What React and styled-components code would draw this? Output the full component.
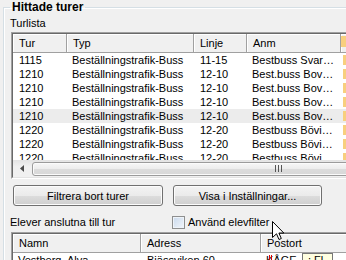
import styled, { createGlobalStyle } from "styled-components";

const GlobalStyle = createGlobalStyle`
  * { box-sizing: border-box; }
  body {
    margin: 0;
    background: #f0f0f0;
    font-family: "Liberation Sans", Arial, sans-serif;
    font-size: 11px;
    color: #000;
    overflow: hidden;
  }
`;

const Screen = styled.div`
  position: relative;
  width: 346px;
  height: 260px;
  overflow: hidden;
  background: #f0f0f0;
`;

const GroupBox = styled.fieldset`
  margin: 0 0 0 3px;
  padding: 0 0 0 6px;
  width: 420px;
  min-inline-size: 0;
  border: 1px solid #d5dfe5;
  border-right: none;
  border-bottom: none;
  box-shadow: inset 1px 1px 0 #fff;
`;

const Legend = styled.legend`
  padding: 0 2px;
  font-size: 12px;
  font-weight: bold;
  line-height: 14px;
`;

const Caption = styled.div`
  margin-top: 3px;
  height: 13px;
  line-height: 13px;
`;

const Frame = styled.div`
  margin: ${(p) => p.$mt}px 0 0 1px;
  width: 400px;
  border: 1px solid;
  border-color: #a0a0a0 #fff #fff #a0a0a0;
`;

const Well = styled.div`
  border: 1px solid;
  border-color: #696969 #e3e3e3 #e3e3e3 #696969;
  background: #fff;
`;

const Row = styled.div`
  display: grid;
  grid-template-columns: ${(p) => p.$cols};
  background: ${(p) => (p.$hot ? "#ececec" : "transparent")};
`;

const HeadCell = styled.div`
  height: 19px;
  line-height: 18px;
  padding-left: ${(p) => p.$pad ?? 6}px;
  background: #f0f0f0;
  border-right: 1px solid #a0a0a0;
  border-bottom: 1px solid #a0a0a0;
  box-shadow: inset 1px 1px 0 #fff;
  white-space: nowrap;
  overflow: hidden;
`;

const Cell = styled.div`
  position: relative;
  height: 14px;
  line-height: 14px;
  padding-left: ${(p) => p.$pad ?? 6}px;
  white-space: nowrap;
  overflow: hidden;
  text-overflow: ellipsis;
`;

const Rows = styled.div`
  height: ${(p) => p.$h}px;
  overflow: hidden;
`;

const Swatch = styled.div`
  margin: ${(p) => (p.$head ? "2px 0 0 0" : "2px 0 0 2px")};
  width: 20px;
  height: ${(p) => (p.$head ? 11 : 10)}px;
  background: #f8cf7e;
`;

const HScroll = styled.div`
  display: flex;
  align-items: center;
  height: 17px;
  background: linear-gradient(#e3e3e3, #f0f0f0 40%, #f0f0f0);
`;

const ArrowBtn = styled.div`
  flex: 0 0 17px;
  height: 17px;
  display: flex;
  align-items: center;
  justify-content: center;
`;

const Thumb = styled.div`
  flex: 0 0 492px;
  margin-left: 2px;
  height: 14px;
  border: 1px solid #9b9b9b;
  border-radius: 3px;
  background: linear-gradient(#f7f7f7, #ececec 50%, #dcdcdc 51%, #d8d8d8);
  box-shadow: inset 0 0 0 1px #fbfbfb;
  display: flex;
  align-items: center;
  justify-content: center;
`;

const ButtonRow = styled.div`
  display: flex;
  gap: 10px;
  margin: 6px 0 0 3px;
`;

const Button = styled.button`
  width: ${(p) => p.$w}px;
  height: 21px;
  padding: 0;
  font: inherit;
  color: #000;
  border: 1px solid #707070;
  border-radius: 3px;
  background: linear-gradient(#f3f3f3, #ebebeb 50%, #dddddd 51%, #cfcfcf);
  box-shadow: inset 0 0 0 1px #fcfcfc;
`;

const OptionRow = styled.div`
  display: flex;
  align-items: center;
  height: 14px;
  margin-top: 9px;
`;

const OptionLabel = styled.div`
  width: 162px;
  line-height: 14px;
`;

const Check = styled.span`
  display: inline-block;
  width: 13px;
  height: 13px;
  margin-right: 3px;
  border: 1px solid #8e8f8f;
  background: linear-gradient(135deg, #c9d9ec, #f2f6fb);
  box-shadow: inset 0 0 0 1px #eef3f9;
`;

const CheckLabel = styled.label`
  display: flex;
  align-items: center;
`;

const Tooltip = styled.div`
  position: absolute;
  left: 302px;
  top: 253px;
  width: 31px;
  height: 14px;
  padding-left: 5px;
  line-height: 12px;
  background: #ffffe1;
  border: 1px solid #767676;
`;

const Caret = styled.span`
  position: absolute;
  left: 8px;
  top: 2px;
  width: 3px;
  height: 11px;
  border-left: 1px solid #e00000;
  border-right: 1px solid #e00000;
`;

const Pointer = styled.svg`
  position: absolute;
  left: 272px;
  top: 221px;
`;

const turCols = "54px 127px 53px 94px 72px";
const elevCols = "128px 120px 150px";

const turer = [
  ["1115", "11-15", "Bestbuss Svar…"],
  ["1210", "12-10", "Best.buss Bov…"],
  ["1210", "12-10", "Best.buss Bov…"],
  ["1210", "12-10", "Best.buss Bov…"],
  ["1210", "12-10", "Best.buss Bov…", true],
  ["1220", "12-20", "Bestbuss Bövi…"],
  ["1220", "12-20", "Bestbuss Bövi…"],
  ["1220", "12-20", "Bestbuss Bövi…"],
];

function TurList() {
  return (
    <Frame $mt={2}>
      <Well>
        <Row $cols={turCols}>
          <HeadCell>Tur</HeadCell>
          <HeadCell>Typ</HeadCell>
          <HeadCell>Linje</HeadCell>
          <HeadCell>Anm</HeadCell>
          <HeadCell $pad={0}>
            <Swatch $head />
          </HeadCell>
        </Row>
        <Rows $h={107}>
          {turer.map(([tur, linje, anm, hot], i) => (
            <Row key={i} $cols={turCols} $hot={hot}>
              <Cell>{tur}</Cell>
              <Cell $pad={5}>Beställningstrafik-Buss</Cell>
              <Cell>{linje}</Cell>
              <Cell $pad={5}>{anm}</Cell>
              <Cell $pad={0}>
                <Swatch />
              </Cell>
            </Row>
          ))}
        </Rows>
        <HScroll>
          <ArrowBtn>
            <svg width="4" height="7" viewBox="0 0 4 7">
              <path d="M4 0 L0 3.5 L4 7 Z" fill="#4a4a4a" />
            </svg>
          </ArrowBtn>
          <Thumb>
            <svg width="7" height="7" viewBox="0 0 7 7">
              <path d="M0.5 0v7M3.5 0v7M6.5 0v7" stroke="#555" strokeWidth="1" />
            </svg>
          </Thumb>
        </HScroll>
      </Well>
    </Frame>
  );
}

function ElevList() {
  return (
    <Frame $mt={3}>
      <Well>
        <Row $cols={elevCols}>
          <HeadCell>Namn</HeadCell>
          <HeadCell>Adress</HeadCell>
          <HeadCell>Postort</HeadCell>
        </Row>
        <Rows $h={14}>
          <Row $cols={elevCols}>
            <Cell $pad={5}>Vestberg, Alva</Cell>
            <Cell>Bjässviken 60</Cell>
            <Cell $pad={5}>
              KÅGE
              <Caret />
            </Cell>
          </Row>
        </Rows>
      </Well>
    </Frame>
  );
}

export default function App() {
  return (
    <Screen>
      <GlobalStyle />
      <GroupBox>
        <Legend>Hittade turer</Legend>
        <Caption>Turlista</Caption>
        <TurList />
        <ButtonRow>
          <Button $w={150}>Filtrera bort turer</Button>
          <Button $w={149}>Visa i Inställningar...</Button>
        </ButtonRow>
        <OptionRow>
          <OptionLabel>Elever anslutna till tur</OptionLabel>
          <CheckLabel>
            <Check />
            Använd elevfilter
          </CheckLabel>
        </OptionRow>
        <ElevList />
      </GroupBox>
      <Tooltip>: Fl</Tooltip>
      <Pointer width="13" height="20" viewBox="0 0 13 20">
        <path
          d="M0.5 0.5 L0.5 16.5 L4.5 12.8 L7 18.5 L9.3 17.5 L6.9 12 L11.8 12 Z"
          fill="#fff"
          stroke="#000"
          strokeWidth="1"
          strokeLinejoin="miter"
        />
      </Pointer>
    </Screen>
  );
}
